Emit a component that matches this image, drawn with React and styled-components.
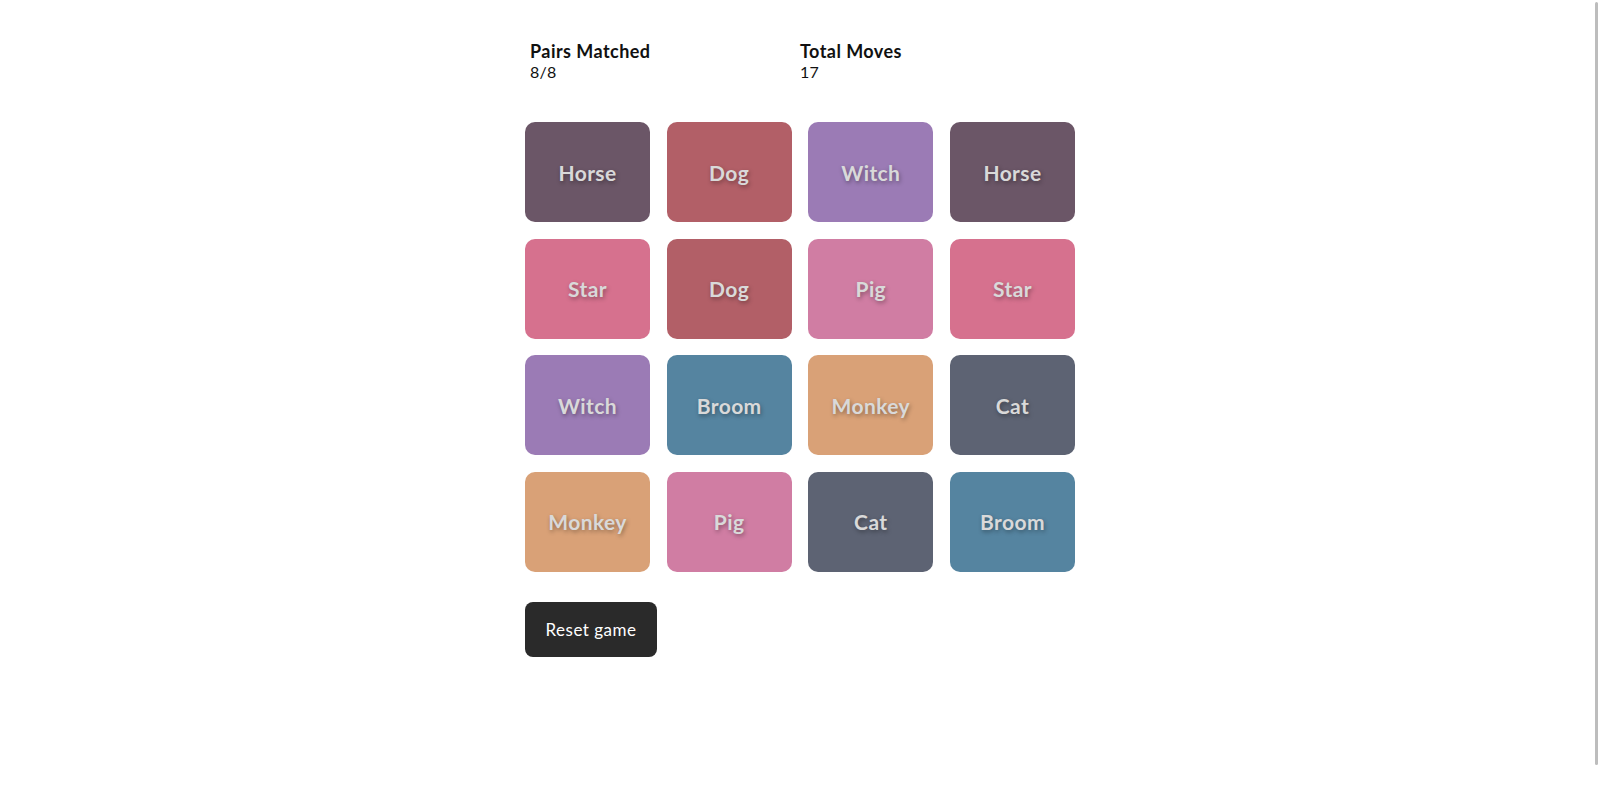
import React from "react";
import styled, { createGlobalStyle } from "styled-components";

const GlobalStyle = createGlobalStyle`
  body {
    margin: 0;
    background: #ffffff;
    font-family: Lato, "Open Sans", sans-serif;
    color: #111;
  }
`;

const palette = {
  Horse: "#6b5667",
  Dog: "#b25f67",
  Witch: "#9b7bb5",
  Star: "#d6718e",
  Pig: "#d07da3",
  Broom: "#5584a0",
  Monkey: "#d9a177",
  Cat: "#5d6373",
};

const cards = [
  "Horse", "Dog", "Witch", "Horse",
  "Star", "Dog", "Pig", "Star",
  "Witch", "Broom", "Monkey", "Cat",
  "Monkey", "Pig", "Cat", "Broom",
];

const Page = styled.main`
  width: 550px;
  margin: 0 auto;
  padding-top: 40px;
`;

const Stats = styled.section`
  display: grid;
  grid-template-columns: 270px 1fr;
  padding-left: 5px;
`;

const StatTitle = styled.h3`
  margin: 0;
  font-size: 18px;
  line-height: 22px;
  font-weight: 700;
  letter-spacing: 0.45px;
  color: #111;
`;

const StatValue = styled.p`
  margin: 0;
  font-size: 16px;
  line-height: 20px;
  font-weight: 400;
  letter-spacing: 0.3px;
  color: #111;
`;

const Board = styled.div`
  display: grid;
  grid-template-columns: repeat(4, 125px);
  grid-auto-rows: 100px;
  column-gap: 16.67px;
  row-gap: 16.5px;
  margin-top: 40px;
`;

const Card = styled.div`
  display: flex;
  align-items: center;
  justify-content: center;
  background: ${(p) => p.$color};
  border-radius: 10px;
  color: #d9d9d9;
  font-size: 21px;
  font-weight: 700;
  letter-spacing: 0.4px;
  text-shadow: 1px 2px 4px rgba(0, 0, 0, 0.35);
`;

const ResetButton = styled.button`
  margin-top: 30px;
  width: 132px;
  height: 55px;
  border: none;
  border-radius: 8px;
  background: #2a2a2a;
  color: #ffffff;
  font-family: Lato, "Open Sans", sans-serif;
  font-size: 17px;
  letter-spacing: 0.5px;
  cursor: pointer;
`;

const ScrollThumb = styled.div`
  position: fixed;
  top: 2px;
  right: 2px;
  width: 3px;
  height: 763px;
  background: #bdbdbd;
  border-radius: 2px;
`;

export default function App() {
  return (
    <>
      <GlobalStyle />
      <Page>
        <Stats>
          <div>
            <StatTitle>Pairs Matched</StatTitle>
            <StatValue>8/8</StatValue>
          </div>
          <div>
            <StatTitle>Total Moves</StatTitle>
            <StatValue>17</StatValue>
          </div>
        </Stats>
        <Board>
          {cards.map((name, i) => (
            <Card key={i} $color={palette[name]}>
              {name}
            </Card>
          ))}
        </Board>
        <ResetButton>Reset game</ResetButton>
      </Page>
      <ScrollThumb />
    </>
  );
}
